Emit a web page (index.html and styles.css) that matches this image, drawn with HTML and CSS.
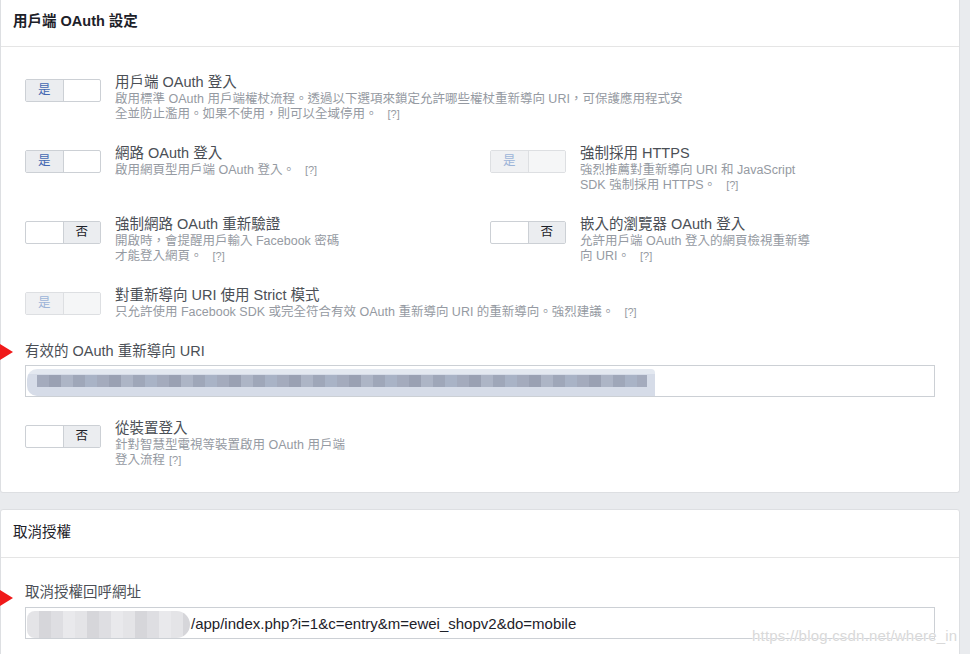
FILE: index.html
```html
<!DOCTYPE html>
<html lang="zh-Hant">
<head>
<meta charset="utf-8">
<title>用戶端 OAuth 設定</title>
<link rel="stylesheet" href="styles.css">
</head>
<body>
<div class="page">
  <section class="card card-first">
    <header class="card-head">用戶端 OAuth 設定</header>
    <div class="card-body">
      <div class="item">
        <div class="toggle on"><span class="seg seg-yes">是</span><span class="seg"></span></div>
        <div class="info">
          <div class="title">用戶端 OAuth 登入</div>
          <div class="desc">啟用標準 OAuth 用戶端權杖流程。透過以下選項來鎖定允許哪些權杖重新導向 URI，可保護應用程式安<br>全並防止濫用。如果不使用，則可以全域停用。<span class="help">[?]</span></div>
        </div>
      </div>

      <div class="pair">
        <div class="item">
          <div class="toggle on"><span class="seg seg-yes">是</span><span class="seg"></span></div>
          <div class="info">
            <div class="title">網路 OAuth 登入</div>
            <div class="desc">啟用網頁型用戶端 OAuth 登入。<span class="help">[?]</span></div>
          </div>
        </div>
        <div class="item">
          <div class="toggle on disabled"><span class="seg seg-yes">是</span><span class="seg"></span></div>
          <div class="info">
            <div class="title">強制採用 HTTPS</div>
            <div class="desc">強烈推薦對重新導向 URI 和 JavaScript<br>SDK 強制採用 HTTPS。<span class="help">[?]</span></div>
          </div>
        </div>
      </div>

      <div class="pair">
        <div class="item">
          <div class="toggle off"><span class="seg"></span><span class="seg seg-no">否</span></div>
          <div class="info">
            <div class="title">強制網路 OAuth 重新驗證</div>
            <div class="desc">開啟時，會提醒用戶輸入 Facebook 密碼<br>才能登入網頁。<span class="help">[?]</span></div>
          </div>
        </div>
        <div class="item">
          <div class="toggle off"><span class="seg"></span><span class="seg seg-no">否</span></div>
          <div class="info">
            <div class="title">嵌入的瀏覽器 OAuth 登入</div>
            <div class="desc">允許用戶端 OAuth 登入的網頁檢視重新導<br>向 URI。<span class="help">[?]</span></div>
          </div>
        </div>
      </div>

      <div class="item">
        <div class="toggle on disabled"><span class="seg seg-yes">是</span><span class="seg"></span></div>
        <div class="info">
          <div class="title">對重新導向 URI 使用 Strict 模式</div>
          <div class="desc">只允許使用 Facebook SDK 或完全符合有效 OAuth 重新導向 URI 的重新導向。強烈建議。<span class="help">[?]</span></div>
        </div>
      </div>

      <div class="field">
        <span class="arrow"></span>
        <div class="label">有效的 OAuth 重新導向 URI</div>
        <div class="input"><span class="blur blur-blue"><span class="mosaic"></span></span></div>
      </div>

      <div class="item">
        <div class="toggle off"><span class="seg"></span><span class="seg seg-no">否</span></div>
        <div class="info">
          <div class="title">從裝置登入</div>
          <div class="desc">針對智慧型電視等裝置啟用 OAuth 用戶端<br>登入流程<span class="help help-tight">[?]</span></div>
        </div>
      </div>
    </div>
  </section>

  <section class="card card-second">
    <header class="card-head">取消授權</header>
    <div class="card-body">
      <div class="field">
        <span class="arrow"></span>
        <div class="label">取消授權回呼網址</div>
        <div class="input"><span class="blur blur-grey"></span><span class="value">/app/index.php?i=1&amp;c=entry&amp;m=ewei_shopv2&amp;do=mobile</span></div>
      </div>
    </div>
  </section>
  <div class="watermark">https://blog.csdn.net/where_in</div>
</div>
</body>
</html>
```

FILE: styles.css
```css
html, body {
  margin: 0;
  padding: 0;
}
body {
  background: #e9ebee;
  font-family: "Liberation Sans", Arial, "Noto Sans CJK TC", sans-serif;
  color: #4b4f56;
  width: 970px;
  height: 654px;
  overflow: hidden;
}
.page {
  position: relative;
  width: 960px;
}
.card {
  background: #fff;
  border: 1px solid #dddfe2;
  border-radius: 3px;
}
.card-first {
  border-top: none;
  border-radius: 0 0 3px 3px;
}
.card-second {
  margin-top: 16px;
}
.card-head {
  height: 44px;
  line-height: 43px;
  padding: 0 12px 2px;
  font-size: 14.5px;
  font-weight: bold;
  color: #1d2129;
  border-bottom: 1px solid #e5e5e5;
}
.card-second .card-head {
  height: 45px;
  line-height: 45px;
  font-weight: normal;
}
.card-first .card-body {
  padding: 25px 24px 24px;
  display: flex;
  flex-direction: column;
  gap: 21px;
}
.card-second .card-body {
  padding: 24px 24px 40px;
}
.pair {
  display: grid;
  grid-template-columns: 465px 1fr;
}
.item {
  display: flex;
  align-items: flex-start;
}
.toggle {
  flex: none;
  display: flex;
  width: 74px;
  height: 21px;
  margin-top: 7px;
  border: 1px solid #ccd0d5;
  border-radius: 2px;
  overflow: hidden;
  background: #fff;
}
.seg {
  width: 37px;
  height: 21px;
  line-height: 21px;
  text-align: center;
  font-size: 12.5px;
}
.seg:first-child {
  border-right: 1px solid #ccd0d5;
  width: 37px;
}
.seg-yes {
  background: #ebedf0;
  color: #4267b2;
}
.seg-no {
  background: #ebedf0;
  color: #1d2129;
}
.toggle.disabled {
  border-color: #dddfe2;
}
.toggle.disabled .seg-yes {
  color: #9cb4d8;
  background: #f0f1f3;
}
.toggle.disabled .seg:first-child {
  border-right-color: #dddfe2;
}
.toggle.disabled .seg:last-child {
  background: #f5f6f7;
}
.info {
  margin-left: 14px;
}
.title {
  font-size: 14.5px;
  line-height: 20px;
  color: #4b4f56;
}
.desc {
  font-size: 12.5px;
  line-height: 15px;
  color: #959aa2;
}
.help {
  font-size: 11px;
  margin-left: 10px;
}
.help-tight {
  margin-left: 4px;
}
.field {
  position: relative;
}
.label {
  font-size: 14.5px;
  line-height: 20px;
  color: #4b4f56;
}
.input {
  margin-top: 4px;
  width: 908px;
  height: 30px;
  border: 1px solid #ccd0d5;
  background: #fff;
  display: flex;
  align-items: center;
  overflow: hidden;
}
.card-second .input {
  margin-top: 5px;
}
.blur {
  display: block;
  flex: none;
}
.blur-blue {
  width: 628px;
  height: 27px;
  margin-top: 3px;
  margin-left: 1px;
  border-radius: 10px 4px 0 10px;
  background: linear-gradient(to bottom, #e3e8f0 0, #e3e8f0 20%, #d6dce8 20%, #d6dce8 100%);
  position: relative;
}
.mosaic {
  position: absolute;
  left: 10px;
  right: 8px;
  top: 6px;
  height: 12px;
  background: repeating-linear-gradient(to right, #a4abbd 0 12px, #9aa1b3 12px 24px, #adb5c6 24px 36px, #9fa7b9 36px 48px, #a9b3c6 48px 60px);
}
.blur-grey {
  width: 163px;
  height: 27px;
  margin-top: 2px;
  margin-left: 1px;
  border-radius: 8px 14px 14px 8px;
  background: repeating-linear-gradient(to right, #e4e4e7 0 12px, #d6d6da 12px 24px, #dedee2 24px 36px, #e9e9ec 36px 48px);
}
.value {
  font-size: 15px;
  color: #1d2129;
  margin-left: 1px;
  white-space: nowrap;
}
.arrow {
  position: absolute;
  left: -25px;
  top: 3px;
  width: 0;
  height: 0;
  border-top: 8px solid transparent;
  border-bottom: 8px solid transparent;
  border-left: 13px solid #f01a1a;
}
.card-second .arrow {
  top: 8px;
}
.watermark {
  position: absolute;
  left: 752px;
  top: 627px;
  font-size: 15px;
  color: #d9d9d9;
  text-shadow: 0 0 1px #fff, 0 0 1px #fff;
  letter-spacing: 0.2px;
  white-space: nowrap;
}
```
